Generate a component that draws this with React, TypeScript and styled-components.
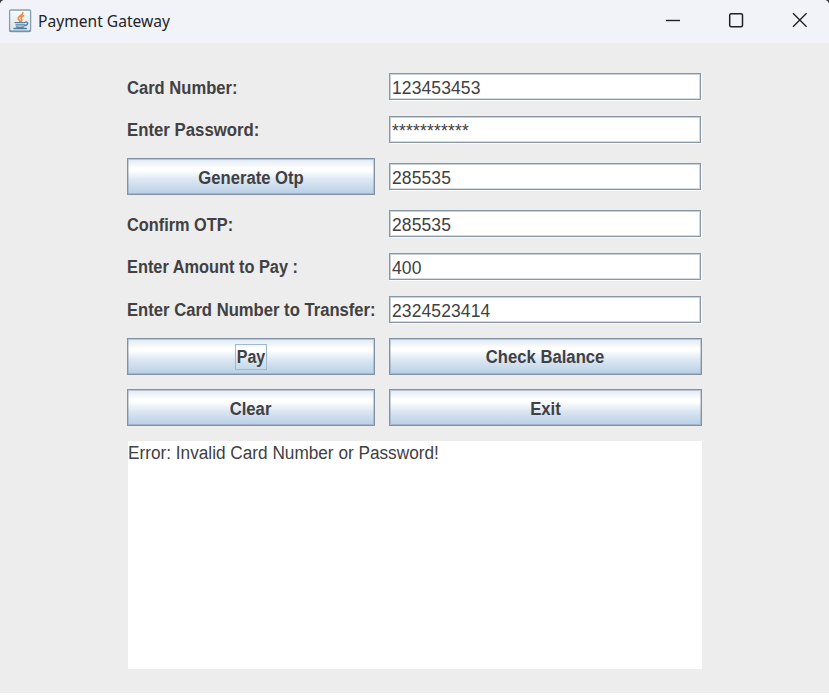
import React from "react";
import styled, { createGlobalStyle } from "styled-components";

const GlobalStyle = createGlobalStyle`
  * { box-sizing: border-box; }
  html, body { margin: 0; padding: 0; background: #fff; }
  button, input { font: inherit; color: inherit; }
`;

const Backdrop = styled.div`
  width: 829px;
  height: 693px;
  background: linear-gradient(#3b3a3f 0 20px, #ededed 20px);
`;

const Window = styled.main`
  height: 693px;
  display: flex;
  flex-direction: column;
  background: #ededed;
  border-radius: 5px 5px 0 0;
  overflow: hidden;
  color: #414042;
  font-family: "Liberation Sans", Arial, sans-serif;
`;

const TitleBar = styled.header`
  height: 43px;
  flex: none;
  display: flex;
  align-items: center;
  padding: 0 0 2px 8px;
  background: #f1f3f9;
`;

const Title = styled.h1`
  flex: 1;
  margin: 0 0 0 6px;
  font: 400 17px/24px "Noto Sans", "Open Sans", sans-serif;
  color: #222326;
  white-space: nowrap;
`;

const Fit = styled.span<{ $scale: number; $origin?: string }>`
  display: inline-block;
  white-space: pre;
  transform: scaleX(${(p) => p.$scale});
  transform-origin: ${(p) => p.$origin ?? "left"} center;
`;

const Controls = styled.div`
  display: flex;
`;

const ControlButton = styled.button<{ $width: number }>`
  width: ${(p) => p.$width}px;
  height: 41px;
  padding: 0 0 1px;
  border: 0;
  background: none;
  display: flex;
  align-items: center;
  justify-content: center;
`;

const Form = styled.form`
  display: grid;
  grid-template-columns: 248px 313px;
  grid-template-rows: 28.5px 28.5px 37px 28.5px 28.5px 28.5px 37px 37px 228px;
  gap: 14.3px 14px;
  margin: 29.7px 0 0 127px;
  align-items: center;
`;

const Label = styled.label`
  height: 24px;
  margin-top: 1.5px;
  font-size: 18px;
  font-weight: 700;
  line-height: 24px;
  white-space: nowrap;
`;

const Field = styled.div<{ $spacing?: number }>`
  width: 312px;
  height: 27px;
  padding: 3px 0 0 2px;
  border: 1px solid #8797a6;
  background: #fff;
  box-shadow: 1px 1px 0 #fcfcfc, inset 1px 1px 0 #c9d0d7, inset -1px -1px 0 #d5dbe1;
  font-size: 17.5px;
  line-height: 23px;
  letter-spacing: ${(p) => p.$spacing ?? 0.1}px;
  white-space: nowrap;
`;

const ActionButton = styled.button`
  width: 100%;
  height: 37px;
  padding: 2px 0 0;
  border: 1px solid #8292a4;
  border-radius: 0;
  background: linear-gradient(#dfe9f3 0%, #fff 27%, #fff 33%, #dce7f2 60%, #b8cfe5 100%);
  box-shadow: inset 0 0 0 1px rgba(130, 146, 164, 0.4);
  font-size: 18px;
  font-weight: 700;
  line-height: 24px;
  text-align: center;
`;

const FocusRing = styled.span`
  display: flex;
  justify-content: center;
  height: 26px;
  width: 32px;
  margin: -1px auto 0;
  border: 1px solid #9fb9d2;
  line-height: 25px;
`;

const Output = styled.output`
  grid-column: 1 / -1;
  align-self: stretch;
  display: block;
  margin-left: 0.5px;
  background: #fff;
  font-size: 18px;
  line-height: 25px;
`;

const JavaIcon = () => (
  <svg width="24" height="24" viewBox="0 0 24 24" fill="none" aria-hidden="true">
    <defs>
      <linearGradient id="tile" x1="0" y1="0" x2="0" y2="1">
        <stop stopColor="#f8f9fa" />
        <stop offset="1" stopColor="#dce4ea" />
      </linearGradient>
    </defs>
    <rect x="1.6" y="1" width="21" height="21.6" rx="1.5" fill="url(#tile)" stroke="#829eb5" strokeWidth="1.3" />
    <path d="M2 20.9v1.2h20v-1.2" stroke="#6d8fab" strokeWidth="1.2" />
    <path d="M14.8 3.8c.3 2.6-4.8 3.2-4.6 5.6.1 1.2 1.2 1.7 1.7 2.8M15.6 6.8c-2.3 1-3.1 2-2.2 3 .7.9.4 1.7-.3 2.4" stroke="#ed8b3c" strokeWidth="1.7" strokeLinecap="round" />
    <path d="M7 13.6h9.8M8 15.9h8.4M8.5 17.9c2 .5 5.2.5 7.2 0M17.3 13.1c3.4-.7 3 3.2-.6 3.4M6 19.5h12.4" stroke="#557f9f" strokeWidth="1.35" strokeLinecap="round" />
  </svg>
);

type Row = { label: string; value: string; scale: number; spacing?: number; button?: boolean };

const rows: Row[] = [
  { label: "Card Number:", value: "123453453", scale: 0.92 },
  { label: "Enter Password:", value: "***********", scale: 0.932, spacing: 0.2 },
  { label: "Generate Otp", value: "285535", scale: 0.925, button: true },
  { label: "Confirm OTP:", value: "285535", scale: 0.907 },
  { label: "Enter Amount to Pay :", value: "400", scale: 0.908 },
  { label: "Enter Card Number to Transfer:", value: "2324523414", scale: 0.924 },
];

const Action = ({ text, scale = 0.927 }: { text: string; scale?: number }) => (
  <ActionButton type="button">
    <Fit $scale={scale} $origin="center">{text}</Fit>
  </ActionButton>
);

export default function App() {
  return (
    <>
      <GlobalStyle />
      <Backdrop>
        <Window>
          <TitleBar>
            <JavaIcon />
            <Title><Fit $scale={0.917}>Payment Gateway</Fit></Title>
            <Controls>
              <ControlButton $width={62} aria-label="Minimize">
                <svg width="16" height="16" fill="none" stroke="#202124" strokeWidth="1.4"><path d="M1 8.5h14" /></svg>
              </ControlButton>
              <ControlButton $width={64} aria-label="Maximize">
                <svg width="16" height="16" fill="none" stroke="#202124" strokeWidth="1.5"><rect x="1.7" y="1.7" width="12.8" height="13" rx="1.5" /></svg>
              </ControlButton>
              <ControlButton $width={61} aria-label="Close">
                <svg width="16" height="16" fill="none" stroke="#202124" strokeWidth="1.4"><path d="M2 1.2l13.6 13.6M15.6 1.2L2 14.8" /></svg>
              </ControlButton>
            </Controls>
          </TitleBar>
          <Form>
            {rows.map((row) => (
              <React.Fragment key={row.label}>
                {row.button
                  ? <Action text={row.label} scale={row.scale} />
                  : <Label><Fit $scale={row.scale}>{row.label}</Fit></Label>}
                <Field $spacing={row.spacing}>{row.value}</Field>
              </React.Fragment>
            ))}
            <ActionButton type="button">
              <FocusRing><Fit $scale={0.89} $origin="center">Pay</Fit></FocusRing>
            </ActionButton>
            <Action text="Check Balance" />
            <Action text="Clear" />
            <Action text="Exit" />
            <Output><Fit $scale={0.956}>Error: Invalid Card Number or Password!</Fit></Output>
          </Form>
        </Window>
      </Backdrop>
    </>
  );
}
